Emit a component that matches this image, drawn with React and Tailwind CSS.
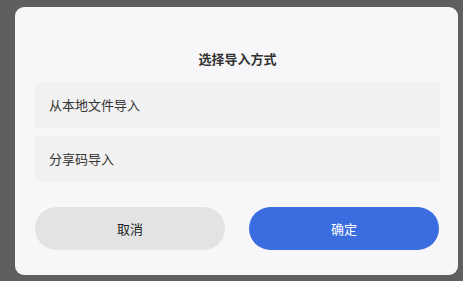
export default function App() {
    const options = ["从本地文件导入", "分享码导入"]

    return (
        <div
            className="min-h-screen bg-[#5f5f5f] pt-[7px] pl-[15px]"
            style={{ fontFamily: '"Noto Sans CJK SC", "Noto Sans", sans-serif' }}
        >
            <div className="w-[443px] h-[268px] bg-[#f7f7fa] rounded-[9px] pl-5 pr-[18px] pt-[43px] flex flex-col">
                <h1 className="text-[13px] leading-[18px] font-bold text-[#333] text-center">选择导入方式</h1>

                <div className="mt-[14px] flex flex-col gap-2">
                    {options.map((opt) => (
                        <div
                            key={opt}
                            className="h-[46px] bg-[#f1f1f1] rounded-[3px] flex items-center pl-[14px] text-[13px] text-[#333]"
                        >
                            {opt}
                        </div>
                    ))}
                </div>

                <div className="mt-[25px] flex gap-6">
                    <button className="w-[190px] h-[43px] rounded-full bg-[#e3e3e3] text-[13px] text-[#222]">
                        取消
                    </button>
                    <button className="w-[190px] h-[43px] rounded-full bg-[#3b6de0] text-[13px] text-white">
                        确定
                    </button>
                </div>
            </div>
        </div>
    )
}
